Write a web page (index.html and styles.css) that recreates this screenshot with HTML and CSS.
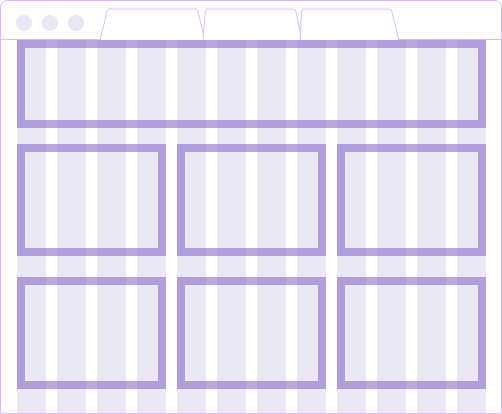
FILE: index.html
```html
<!DOCTYPE html>
<html lang="en">

<head>
    <meta charset="UTF-8">
    <meta name="viewport" content="width=device-width, initial-scale=1.0">
    <title>Grid layout</title>
    <link rel="stylesheet" href="styles.css">
</head>

<body>
    <div class="window">
        <!-- Browser chrome -->
        <div class="window-bar">
            <div class="dots">
                <span class="dot"></span>
                <span class="dot"></span>
                <span class="dot"></span>
            </div>
            <svg class="tabs" width="304" height="39" viewBox="98 0 304 39">
                <path d="M100,39.5 L107.2,10 Q107.8,8 110,8 L195,8 Q197.3,8 197.8,10 L205,39.5" />
                <path d="M203,39.5 L205.3,10 Q205.8,8 208,8 L293,8 Q295.3,8 295.8,10 L302,39.5" />
                <path d="M300,39.5 L301.6,10 Q302,8 304,8 L389,8 Q391.3,8 391.8,10 L399,39.5" />
            </svg>
        </div>

        <!-- Page area -->
        <div class="page">
            <div class="columns">
                <div class="col"></div>
                <div class="col"></div>
                <div class="col"></div>
                <div class="col"></div>
                <div class="col"></div>
                <div class="col"></div>
                <div class="col"></div>
                <div class="col"></div>
                <div class="col"></div>
                <div class="col"></div>
                <div class="col"></div>
                <div class="col"></div>
            </div>
            <div class="blocks">
                <div class="block block-wide"></div>
                <div class="block row-2"></div>
                <div class="block row-2"></div>
                <div class="block row-2"></div>
                <div class="block row-3"></div>
                <div class="block row-3"></div>
                <div class="block row-3"></div>
            </div>
        </div>
    </div>
</body>

</html>
```

FILE: styles.css
```css
* {
    margin: 0;
    padding: 0;
    box-sizing: border-box;
}

body {
    background: #ffffff;
    width: 502px;
    height: 414px;
    overflow: hidden;
}

.window {
    width: 502px;
    height: 414px;
    border: 1px solid #dcbcff;
    border-radius: 7px 7px 0 0;
    display: flex;
    flex-direction: column;
    overflow: hidden;
}

.window-bar {
    height: 39px;
    border-bottom: 1px solid #dcbcff;
    display: flex;
    align-items: flex-end;
    flex-shrink: 0;
}

.dots {
    display: flex;
    gap: 10px;
    padding-left: 15px;
    margin-bottom: 8px;
}

.dot {
    width: 16px;
    height: 16px;
    border-radius: 50%;
    background: #eae6f5;
}

.tabs {
    display: block;
    margin-left: 14px;
    margin-bottom: -1px;
    overflow: visible;
}

.tabs path {
    fill: #ffffff;
    stroke: #dcbcff;
    stroke-width: 1;
}

.page {
    flex: 1;
    display: grid;
    padding: 0 15px 0 16px;
}

.columns,
.blocks {
    grid-area: 1 / 1;
    display: grid;
    grid-template-columns: repeat(12, 1fr);
    column-gap: 11px;
}

.col {
    background: #ebe8f6;
}

.blocks {
    grid-template-rows: 88px 16px 112px 21px 112px;
}

.block {
    border: 8px solid rgba(120, 82, 190, 0.5);
    grid-column: span 4;
}

.block-wide {
    grid-column: 1 / -1;
    grid-row: 1;
}

.row-2 {
    grid-row: 3;
}

.row-3 {
    grid-row: 5;
}
```
